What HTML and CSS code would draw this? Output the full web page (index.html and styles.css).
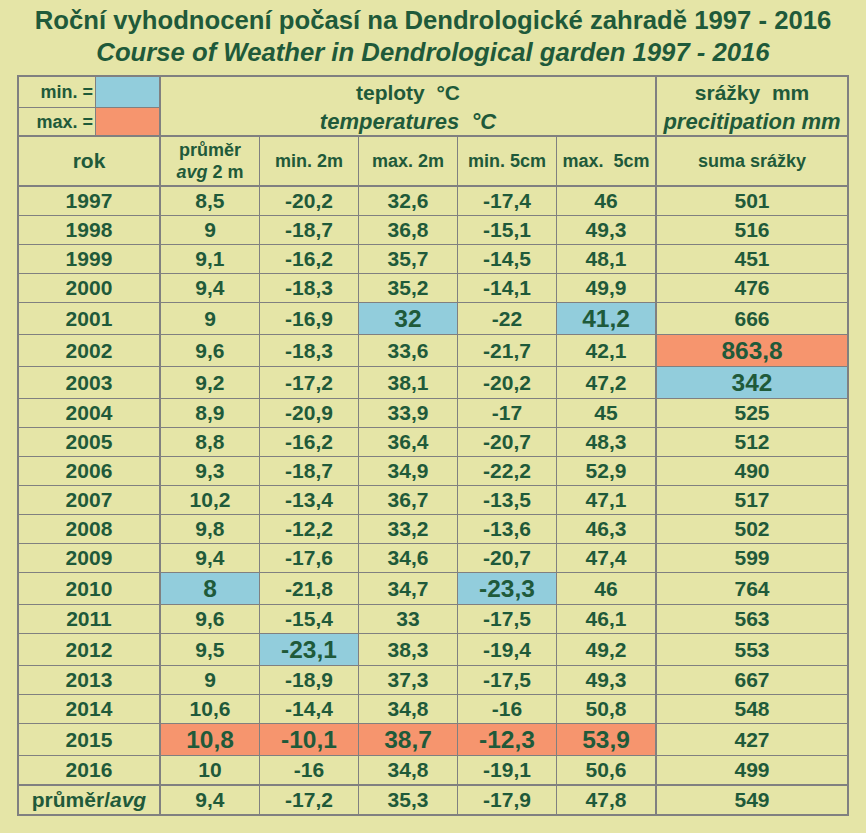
FILE: index.html
```html
<!DOCTYPE html>
<html lang="cs">
<head>
<meta charset="utf-8">
<title>Roční vyhodnocení počasí</title>
<link rel="stylesheet" href="styles.css">
</head>
<body>
<div class="page">
  <h1 class="title">
    <span class="title-cz">Roční vyhodnocení počasí na Dendrologické zahradě 1997 - 2016</span>
    <span class="title-en">Course of Weather in Dendrological garden 1997 - 2016</span>
  </h1>
  <table class="weather">
    <colgroup>
      <col class="c-a"><col class="c-b"><col class="c-n"><col class="c-n"><col class="c-n"><col class="c-n"><col class="c-g"><col class="c-h">
    </colgroup>
    <thead>
      <tr class="h1">
        <td class="legend-label">min. =</td>
        <td class="swatch lo b2"></td>
        <td colspan="5" class="group nob b2">teploty&nbsp; °C</td>
        <td class="group nob last">srážky&nbsp; mm</td>
      </tr>
      <tr class="h2 thick">
        <td class="legend-label">max. =</td>
        <td class="swatch hi b2"></td>
        <td colspan="5" class="group it b2">temperatures&nbsp; °C</td>
        <td class="group it last">precitipation mm</td>
      </tr>
      <tr class="h3 thick">
        <td colspan="2" class="rok b2">rok</td>
        <td class="sub">průměr<br><i>avg</i> 2 m</td>
        <td class="sub">min. 2m</td>
        <td class="sub">max. 2m</td>
        <td class="sub">min. 5cm</td>
        <td class="sub b2">max.&nbsp; 5cm</td>
        <td class="sub last">suma srážky</td>
      </tr>
    </thead>
    <tbody>
      <tr><td colspan="2" class="b2">1997</td><td>8,5</td><td>-20,2</td><td>32,6</td><td>-17,4</td><td class="b2">46</td><td class="last">501</td></tr>
      <tr><td colspan="2" class="b2">1998</td><td>9</td><td>-18,7</td><td>36,8</td><td>-15,1</td><td class="b2">49,3</td><td class="last">516</td></tr>
      <tr><td colspan="2" class="b2">1999</td><td>9,1</td><td>-16,2</td><td>35,7</td><td>-14,5</td><td class="b2">48,1</td><td class="last">451</td></tr>
      <tr><td colspan="2" class="b2">2000</td><td>9,4</td><td>-18,3</td><td>35,2</td><td>-14,1</td><td class="b2">49,9</td><td class="last">476</td></tr>
      <tr class="tall"><td colspan="2" class="b2">2001</td><td>9</td><td>-16,9</td><td class="mark lo">32</td><td>-22</td><td class="mark lo b2">41,2</td><td class="last">666</td></tr>
      <tr class="tall"><td colspan="2" class="b2">2002</td><td>9,6</td><td>-18,3</td><td>33,6</td><td>-21,7</td><td class="b2">42,1</td><td class="mark hi last">863,8</td></tr>
      <tr class="tall"><td colspan="2" class="b2">2003</td><td>9,2</td><td>-17,2</td><td>38,1</td><td>-20,2</td><td class="b2">47,2</td><td class="mark lo last">342</td></tr>
      <tr><td colspan="2" class="b2">2004</td><td>8,9</td><td>-20,9</td><td>33,9</td><td>-17</td><td class="b2">45</td><td class="last">525</td></tr>
      <tr><td colspan="2" class="b2">2005</td><td>8,8</td><td>-16,2</td><td>36,4</td><td>-20,7</td><td class="b2">48,3</td><td class="last">512</td></tr>
      <tr><td colspan="2" class="b2">2006</td><td>9,3</td><td>-18,7</td><td>34,9</td><td>-22,2</td><td class="b2">52,9</td><td class="last">490</td></tr>
      <tr><td colspan="2" class="b2">2007</td><td>10,2</td><td>-13,4</td><td>36,7</td><td>-13,5</td><td class="b2">47,1</td><td class="last">517</td></tr>
      <tr><td colspan="2" class="b2">2008</td><td>9,8</td><td>-12,2</td><td>33,2</td><td>-13,6</td><td class="b2">46,3</td><td class="last">502</td></tr>
      <tr><td colspan="2" class="b2">2009</td><td>9,4</td><td>-17,6</td><td>34,6</td><td>-20,7</td><td class="b2">47,4</td><td class="last">599</td></tr>
      <tr class="tall"><td colspan="2" class="b2">2010</td><td class="mark lo">8</td><td>-21,8</td><td>34,7</td><td class="mark lo">-23,3</td><td class="b2">46</td><td class="last">764</td></tr>
      <tr><td colspan="2" class="b2">2011</td><td>9,6</td><td>-15,4</td><td>33</td><td>-17,5</td><td class="b2">46,1</td><td class="last">563</td></tr>
      <tr class="tall"><td colspan="2" class="b2">2012</td><td>9,5</td><td class="mark lo">-23,1</td><td>38,3</td><td>-19,4</td><td class="b2">49,2</td><td class="last">553</td></tr>
      <tr><td colspan="2" class="b2">2013</td><td>9</td><td>-18,9</td><td>37,3</td><td>-17,5</td><td class="b2">49,3</td><td class="last">667</td></tr>
      <tr><td colspan="2" class="b2">2014</td><td>10,6</td><td>-14,4</td><td>34,8</td><td>-16</td><td class="b2">50,8</td><td class="last">548</td></tr>
      <tr class="tall"><td colspan="2" class="b2">2015</td><td class="mark hi">10,8</td><td class="mark hi">-10,1</td><td class="mark hi">38,7</td><td class="mark hi">-12,3</td><td class="mark hi b2">53,9</td><td class="last">427</td></tr>
      <tr class="pre-avg thick"><td colspan="2" class="b2">2016</td><td>10</td><td>-16</td><td>34,8</td><td>-19,1</td><td class="b2">50,6</td><td class="last">499</td></tr>
      <tr class="avg"><td colspan="2" class="b2">průměr/<i>avg</i></td><td>9,4</td><td>-17,2</td><td>35,3</td><td>-17,9</td><td class="b2">47,8</td><td class="last">549</td></tr>
    </tbody>
  </table>
</div>
</body>
</html>
```
FILE: styles.css
```css
html, body {
  margin: 0;
  padding: 0;
  background: #e5e5a7;
}

.page {
  display: flex;
  flex-direction: column;
  align-items: center;
  padding-top: 4px;
  color: #1f5a3a;
  font-family: "Liberation Sans", Arial, sans-serif;
}

.title {
  margin: 0 0 7px 0;
  font-size: 25.7px;
  font-weight: bold;
  line-height: 32px;
  text-align: center;
  display: flex;
  flex-direction: column;
}

.title-en {
  font-style: italic;
}

.weather {
  box-sizing: border-box;
  width: 832px;
  table-layout: fixed;
  border-collapse: separate;
  border-spacing: 0;
  border: 2px solid #808080;
  font-size: 21px;
  font-weight: bold;
  color: #1f5a3a;
}

.c-a { width: 77px; }
.c-b { width: 65px; }
.c-n { width: 99px; }
.c-g { width: 100px; }
.c-h { width: 190px; }

.weather td {
  box-sizing: border-box;
  padding: 0;
  text-align: center;
  vertical-align: middle;
  border-right: 1px solid #808080;
  border-bottom: 1px solid #808080;
  white-space: nowrap;
  line-height: 24px;
}

.weather td.b2 { border-right-width: 2px; }
.weather td.last { border-right: none; }
.weather td.nob { border-bottom: none; }
.weather tr.thick td { border-bottom-width: 2px; }
.weather tr.avg td { border-bottom: none; }

.weather tr { height: 29px; }
.weather tr.h1 { height: 31px; }
.weather tr.h2 { height: 29px; }
.weather tr.h3 { height: 50px; }
.weather tr.tall { height: 32px; }
.weather tr.pre-avg { height: 30px; }
.weather tr.avg { height: 28px; }

.legend-label {
  font-size: 18px;
  text-align: right !important;
  padding-right: 2px !important;
}

.lo { background: #92cddc; }
.hi { background: #f6956e; }

.mark {
  font-size: 24.5px;
}

.group.it {
  font-style: italic;
  font-size: 22px;
}

.sub {
  font-size: 18px;
  line-height: 22px !important;
}
```
